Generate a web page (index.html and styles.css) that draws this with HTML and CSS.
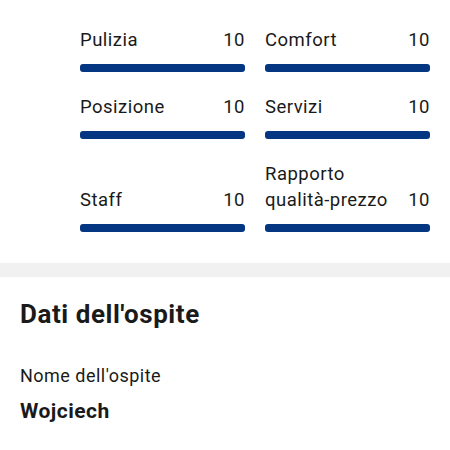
FILE: index.html
```html
<!DOCTYPE html>
<html lang="it">
<head>
  <meta charset="UTF-8" />
  <meta name="viewport" content="width=device-width, initial-scale=1.0"/>
  <title>Recensione</title>
  <link rel="stylesheet" href="styles.css">
</head>
<body>
  <section class="scores">
    <div class="score">
      <div class="score-head"><span>Pulizia</span><span>10</span></div>
      <div class="bar"></div>
    </div>
    <div class="score">
      <div class="score-head"><span>Comfort</span><span>10</span></div>
      <div class="bar"></div>
    </div>
    <div class="score">
      <div class="score-head"><span>Posizione</span><span>10</span></div>
      <div class="bar"></div>
    </div>
    <div class="score">
      <div class="score-head"><span>Servizi</span><span>10</span></div>
      <div class="bar"></div>
    </div>
    <div class="score">
      <div class="score-head"><span>Staff</span><span>10</span></div>
      <div class="bar"></div>
    </div>
    <div class="score">
      <div class="score-head"><span>Rapporto<br>qualità-prezzo</span><span>10</span></div>
      <div class="bar"></div>
    </div>
  </section>

  <div class="divider"></div>

  <section class="guest">
    <h2>Dati dell'ospite</h2>
    <p class="label">Nome dell'ospite</p>
    <p class="name">Wojciech</p>
  </section>
</body>
</html>
```

FILE: styles.css
```css
body {
  margin: 0;
  font-family: Roboto, "Noto Sans", sans-serif;
  color: #1a1a1a;
  background: #fff;
  letter-spacing: 0.03em;
}

.scores {
  display: grid;
  grid-template-columns: 165px 165px;
  column-gap: 20px;
  row-gap: 22px;
  padding: 27px 20px 31px 80px;
}

.score {
  display: flex;
  flex-direction: column;
  justify-content: flex-end;
}

.score-head {
  display: flex;
  justify-content: space-between;
  align-items: flex-end;
  font-size: 18.5px;
  line-height: 26px;
  margin-bottom: 11px;
}

.bar {
  height: 8px;
  background: #053682;
  border-radius: 3px;
}

.divider {
  height: 14px;
  background: #f1f1f1;
}

.guest {
  padding: 21px 20px;
}

.guest h2 {
  margin: 0 0 34px;
  font-size: 26px;
  line-height: 32px;
  font-weight: 700;
  letter-spacing: 0.55px;
}

.label {
  margin: 0 0 9px;
  font-size: 18px;
  line-height: 24px;
}

.name {
  margin: 0;
  font-size: 21px;
  line-height: 28px;
  font-weight: 700;
}
```
